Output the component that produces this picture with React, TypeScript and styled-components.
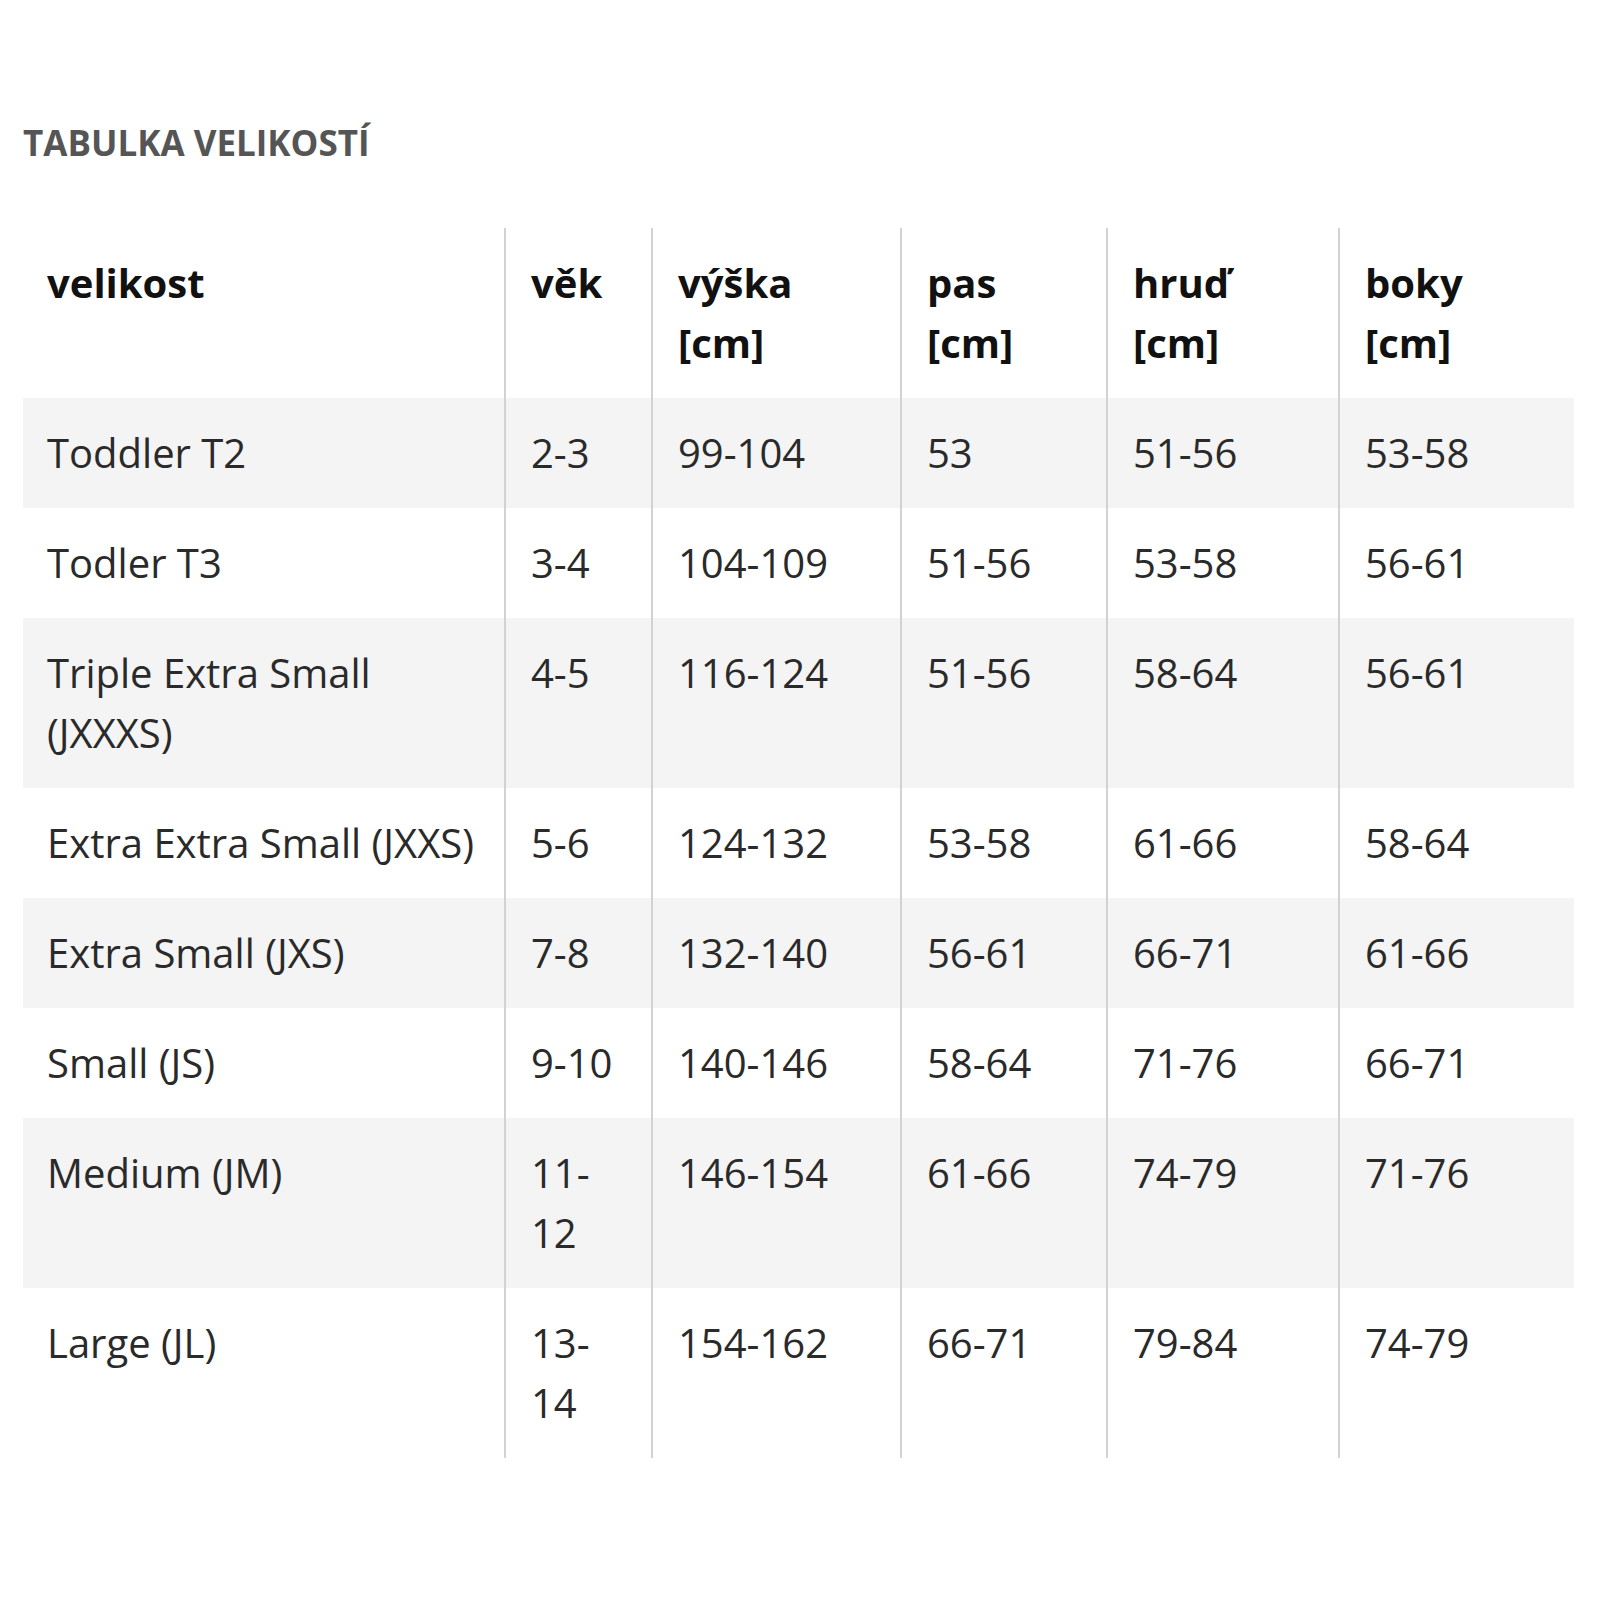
import React from "react";
import styled, { createGlobalStyle } from "styled-components";

const Global = createGlobalStyle`
  html, body { margin: 0; padding: 0; background: #ffffff; }
  body { font-family: "Open Sans", "Noto Sans", sans-serif; }
`;

const Page = styled.div`
  padding: 120px 26px 120px 23px;
`;

const Title = styled.h2`
  margin: 0 0 62px 0;
  font-size: 35px;
  line-height: 46px;
  font-weight: 700;
  color: #555555;
  text-transform: uppercase;
`;

const Table = styled.table`
  width: 1551px;
  border-collapse: collapse;
  table-layout: fixed;
  font-size: 40px;
  line-height: 60px;
`;

const Col = styled.col<{ $w: number }>`
  width: ${(p) => p.$w}px;
`;

const Row = styled.tr<{ $striped?: boolean }>`
  background: ${(p) => (p.$striped ? "#f4f4f4" : "transparent")};
`;

const HeadCell = styled.th`
  padding: 25px;
  text-align: left;
  vertical-align: top;
  font-weight: 700;
  color: #111111;
  &:first-child { padding-left: 24px; }
  & + & { border-left: 2px solid #d2d2d2; }
`;

const Cell = styled.td`
  padding: 25px;
  text-align: left;
  vertical-align: top;
  color: #2a2a2a;
  &:first-child { padding-left: 24px; }
  & + & { border-left: 2px solid #d2d2d2; }
`;

const widths = [482, 147, 249, 206, 232, 235];

const headers: React.ReactNode[] = [
  "velikost",
  "věk",
  <>výška<br />[cm]</>,
  <>pas<br />[cm]</>,
  <>hruď<br />[cm]</>,
  <>boky<br />[cm]</>,
];

const rows: string[][] = [
  ["Toddler T2", "2-3", "99-104", "53", "51-56", "53-58"],
  ["Todler T3", "3-4", "104-109", "51-56", "53-58", "56-61"],
  ["Triple Extra Small (JXXXS)", "4-5", "116-124", "51-56", "58-64", "56-61"],
  ["Extra Extra Small (JXXS)", "5-6", "124-132", "53-58", "61-66", "58-64"],
  ["Extra Small (JXS)", "7-8", "132-140", "56-61", "66-71", "61-66"],
  ["Small (JS)", "9-10", "140-146", "58-64", "71-76", "66-71"],
  ["Medium (JM)", "11-12", "146-154", "61-66", "74-79", "71-76"],
  ["Large (JL)", "13-14", "154-162", "66-71", "79-84", "74-79"],
];

export default function App() {
  return (
    <>
      <Global />
      <Page>
        <Title>Tabulka velikostí</Title>
        <Table>
          <colgroup>
            {widths.map((w, i) => (
              <Col key={i} $w={w} />
            ))}
          </colgroup>
          <thead>
            <Row>
              {headers.map((h, i) => (
                <HeadCell key={i}>{h}</HeadCell>
              ))}
            </Row>
          </thead>
          <tbody>
            {rows.map((r, i) => (
              <Row key={i} $striped={i % 2 === 0}>
                {r.map((c, j) => (
                  <Cell key={j}>{c}</Cell>
                ))}
              </Row>
            ))}
          </tbody>
        </Table>
      </Page>
    </>
  );
}
